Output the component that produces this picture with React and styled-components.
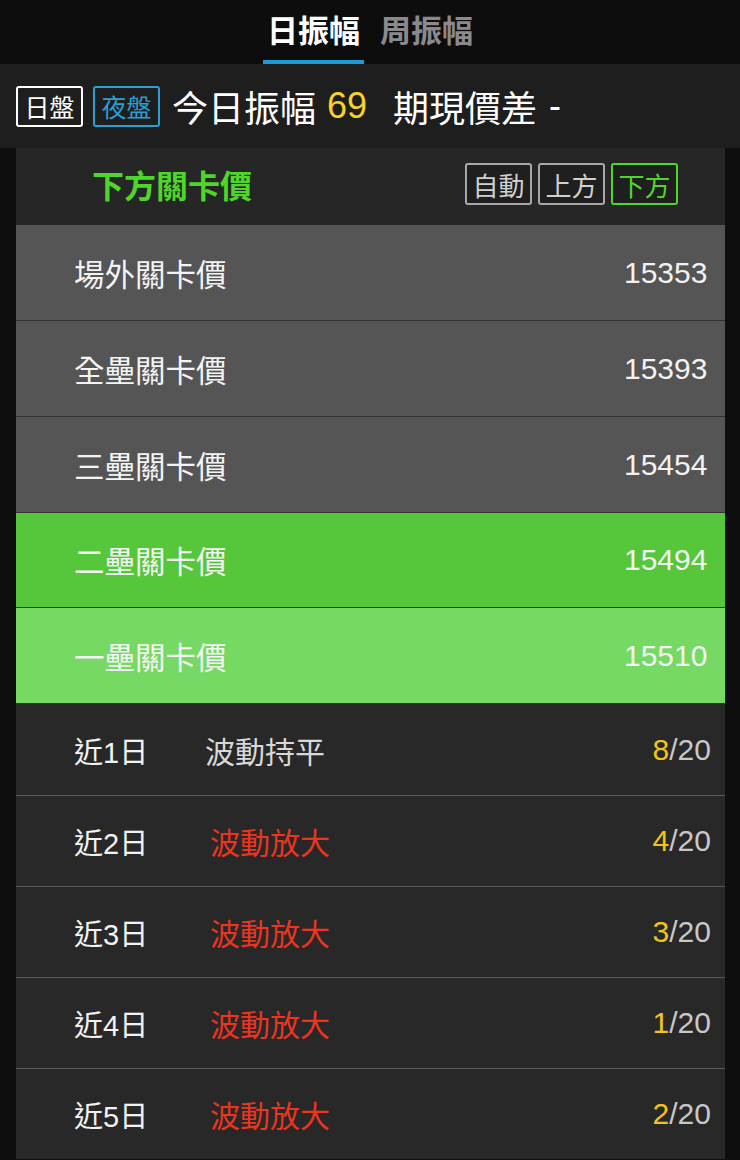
import React from "react";
import styled, { createGlobalStyle } from "styled-components";

const Global = createGlobalStyle`
  html, body { margin: 0; padding: 0; background: #0e0e0e; }
  body { font-family: "Liberation Sans", "Noto Sans CJK TC", sans-serif; color: #fff; }
`;

const Page = styled.div`
  width: 740px;
  min-height: 1160px;
  background: #0e0e0e;
`;

const TabBar = styled.div`
  height: 64px;
  display: flex;
  justify-content: center;
  align-items: stretch;
  gap: 12px;
  box-sizing: border-box;
  background: #0d0d0d;
`;

const Tab = styled.div`
  display: flex;
  align-items: center;
  padding: 0 4px 4px;
  font-size: 31px;
  font-weight: 700;
  color: ${(p) => (p.$active ? "#ffffff" : "#8a8a8e")};
  border-bottom: 4px solid ${(p) => (p.$active ? "#1e9ad6" : "transparent")};
  box-sizing: border-box;
`;

const InfoBar = styled.div`
  height: 84px;
  display: flex;
  align-items: center;
  padding-left: 16px;
  background: #1e1e1e;
  box-sizing: border-box;
`;

const SessionBtn = styled.div`
  height: 41px;
  width: 67px;
  box-sizing: border-box;
  display: flex;
  align-items: center;
  justify-content: center;
  border: 2px solid ${(p) => p.$color};
  color: ${(p) => p.$color};
  border-radius: 3px;
  font-size: 25px;
  margin-right: ${(p) => p.$mr}px;
`;

const InfoText = styled.span`
  font-size: 36px;
  color: ${(p) => p.$color || "#ffffff"};
  margin-right: ${(p) => p.$mr || 0}px;
`;

const Panel = styled.div`
  margin: 0 15px 0 16px;
  background: #262626;
`;

const PanelHeader = styled.div`
  height: 77px;
  display: flex;
  align-items: center;
  justify-content: space-between;
  padding: 0 47px 5px 76px;
  box-sizing: border-box;
`;

const PanelTitle = styled.div`
  font-size: 32px;
  font-weight: 700;
  color: #4fd62a;
`;

const ModeGroup = styled.div`
  display: flex;
  gap: 6px;
`;

const ModeBtn = styled.div`
  width: 67px;
  height: 42px;
  box-sizing: border-box;
  display: flex;
  align-items: center;
  justify-content: center;
  border: 2px solid ${(p) => (p.$active ? "#4fd62a" : "#a8a8a8")};
  color: ${(p) => (p.$active ? "#4fd62a" : "#d0d0d0")};
  background: #1f1f1f;
  border-radius: 3px;
  font-size: 26px;
`;

const LevelRow = styled.div`
  height: ${(p) => p.$h}px;
  box-sizing: border-box;
  display: flex;
  align-items: center;
  justify-content: space-between;
  padding: 0 18px 0 58px;
  background: ${(p) => p.$bg};
  border-bottom: 1px solid #333333;
  font-size: 30.5px;
  color: #f4f4f4;
`;

const LevelValue = styled.span`
  width: 83px;
  text-align: left;
  font-size: 30px;
  color: #f2f2f2;
`;

const StatRow = styled.div`
  height: 91px;
  box-sizing: border-box;
  display: flex;
  align-items: center;
  padding: 0 14px 0 58px;
  background: #282828;
  border-top: ${(p) => (p.$first ? "none" : "1px solid #5a5a5a")};
  font-size: 29px;
`;

const StatLabel = styled.span`
  color: #f2f2f2;
  width: ${(p) => p.$w}px;
`;

const StatState = styled.span`
  flex: 1;
  color: ${(p) => p.$color};
  font-size: 30px;
`;

const Ratio = styled.span`
  font-size: 30px;
  color: #c8c8c8;
`;

const RatioNum = styled.span`
  color: #f0c419;
`;

const levels = [
  { name: "場外關卡價", value: "15353", bg: "#555555", h: 96 },
  { name: "全壘關卡價", value: "15393", bg: "#555555", h: 96 },
  { name: "三壘關卡價", value: "15454", bg: "#555555", h: 96 },
  { name: "二壘關卡價", value: "15494", bg: "#56c73a", h: 95 },
  { name: "一壘關卡價", value: "15510", bg: "#75d963", h: 96 },
];

const stats = [
  { label: "近1日", state: "波動持平", color: "#d8d8d8", n: "8", w: 131 },
  { label: "近2日", state: "波動放大", color: "#ea3520", n: "4", w: 136 },
  { label: "近3日", state: "波動放大", color: "#ea3520", n: "3", w: 136 },
  { label: "近4日", state: "波動放大", color: "#ea3520", n: "1", w: 136 },
  { label: "近5日", state: "波動放大", color: "#ea3520", n: "2", w: 136 },
];

export default function App() {
  return (
    <Page>
      <Global />
      <TabBar>
        <Tab $active>日振幅</Tab>
        <Tab>周振幅</Tab>
      </TabBar>
      <InfoBar>
        <SessionBtn $color="#ffffff" $mr={10}>日盤</SessionBtn>
        <SessionBtn $color="#2a9fd6" $mr={12}>夜盤</SessionBtn>
        <InfoText $mr={11}>今日振幅</InfoText>
        <InfoText $color="#f5d328" $mr={26}>69</InfoText>
        <InfoText $mr={12}>期現價差</InfoText>
        <InfoText>-</InfoText>
      </InfoBar>
      <Panel>
        <PanelHeader>
          <PanelTitle>下方關卡價</PanelTitle>
          <ModeGroup>
            <ModeBtn>自動</ModeBtn>
            <ModeBtn>上方</ModeBtn>
            <ModeBtn $active>下方</ModeBtn>
          </ModeGroup>
        </PanelHeader>
        {levels.map((l) => (
          <LevelRow key={l.name} $bg={l.bg} $h={l.h}>
            <span>{l.name}</span>
            <LevelValue>{l.value}</LevelValue>
          </LevelRow>
        ))}
        {stats.map((s, i) => (
          <StatRow key={s.label} $first={i === 0}>
            <StatLabel $w={s.w}>{s.label}</StatLabel>
            <StatState $color={s.color}>{s.state}</StatState>
            <Ratio>
              <RatioNum>{s.n}</RatioNum>/20
            </Ratio>
          </StatRow>
        ))}
      </Panel>
    </Page>
  );
}
